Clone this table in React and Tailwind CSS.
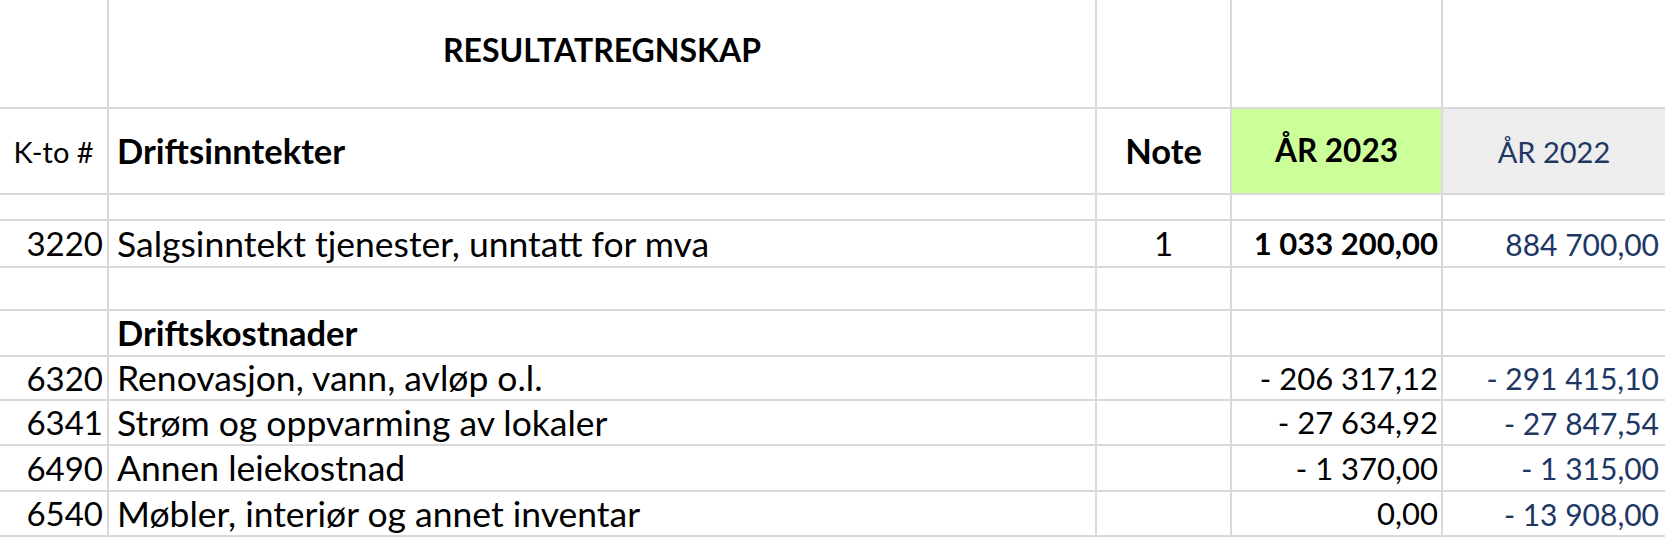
const font = { fontFamily: 'Lato, "Open Sans", sans-serif' };

const rows = [
  { h: 'h-[26px]' },
  { h: 'h-[47px]', kto: '3220', text: 'Salgsinntekt tjenester, unntatt for mva', note: '1', y23: '1 033 200,00', y22: '884 700,00', bold23: true },
  { h: 'h-[43px]' },
  { h: 'h-[46px]', text: 'Driftskostnader', boldText: true },
  { h: 'h-[44px]', kto: '6320', text: 'Renovasjon, vann, avløp o.l.', y23: '- 206 317,12', y22: '- 291 415,10' },
  { h: 'h-[45px]', kto: '6341', text: 'Strøm og oppvarming av lokaler', y23: '- 27 634,92', y22: '- 27 847,54' },
  { h: 'h-[46px]', kto: '6490', text: 'Annen leiekostnad', y23: '- 1 370,00', y22: '- 1 315,00' },
  { h: 'h-[45px]', kto: '6540', text: 'Møbler, interiør og annet inventar', y23: '0,00', y22: '- 13 908,00' },
];

const cols = 'grid grid-cols-[109px_988px_135px_211px_222px]';
const cell = 'border-b-2 border-[#d9d9d9] flex items-center';

function Row({ r }) {
  return (
    <div className={`${cols} ${r.h}`}>
      <div className={`${cell} border-r-2 justify-end pr-[4px] text-[33px]`}>{r.kto}</div>
      <div className={`${cell} border-r-2 pl-[8px] ${r.boldText ? 'font-bold text-[34.5px]' : 'text-[35.5px]'}`}>{r.text}</div>
      <div className={`${cell} border-r-2 justify-center text-[33px]`}>{r.note}</div>
      <div className={`${cell} border-r-2 justify-end pr-[3px] text-[31px] ${r.bold23 ? 'font-bold' : ''}`}>{r.y23}</div>
      <div className={`${cell} justify-end pr-[6px] text-[30px] text-[#203764]`}>{r.y22}</div>
    </div>
  );
}

export default function App() {
  return (
    <div className="w-[1665px] h-[539px] bg-white text-black overflow-hidden leading-none" style={font}>
      <div className={`${cols} h-[109px]`}>
        <div className={`${cell} border-r-2`}></div>
        <div className={`${cell} border-r-2 justify-center pb-[8px] text-[32px] font-bold`}>RESULTATREGNSKAP</div>
        <div className={`${cell} border-r-2`}></div>
        <div className={`${cell} border-r-2`}></div>
        <div className={cell}></div>
      </div>
      <div className={`${cols} h-[86px]`}>
        <div className={`${cell} border-r-2 justify-center text-[29px]`}>K-to #</div>
        <div className={`${cell} border-r-2 pl-[8px] text-[34.5px] font-bold`}>Driftsinntekter</div>
        <div className={`${cell} border-r-2 justify-center text-[34.5px] font-bold`}>Note</div>
        <div className={`${cell} border-r-2 justify-center text-[31.5px] font-bold bg-[#ccff99]`}>ÅR 2023</div>
        <div className={`${cell} justify-center text-[29px] text-[#203764] bg-[#ededed]`}>ÅR 2022</div>
      </div>
      {rows.map((r, i) => (
        <Row key={i} r={r} />
      ))}
    </div>
  );
}
